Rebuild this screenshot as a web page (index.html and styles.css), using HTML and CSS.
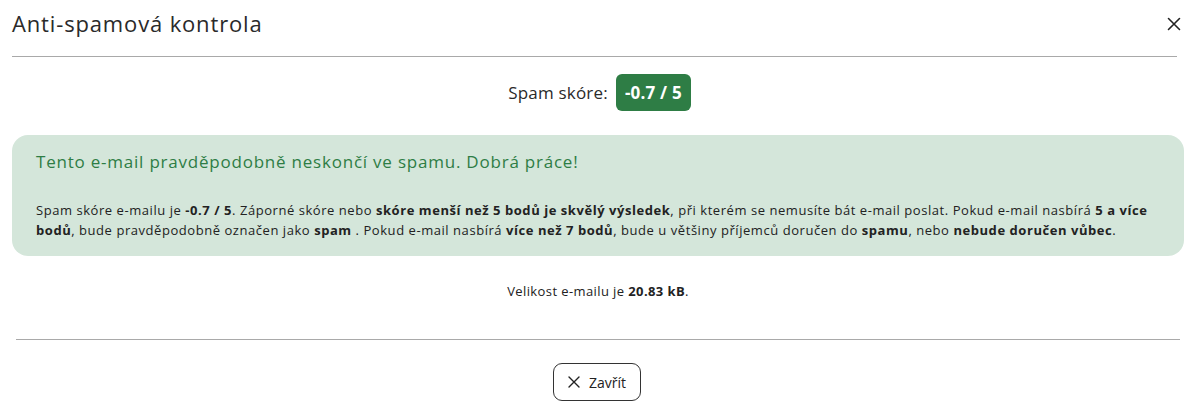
FILE: index.html
```html
<!DOCTYPE html>
<html lang="cs">
<head>
<meta charset="utf-8">
<link rel="stylesheet" href="styles.css">
</head>
<body>
<div class="modal">
  <div class="modal-header">
    <h1 class="title">Anti-spamová kontrola</h1>
    <button class="close" aria-label="Zavřít">
      <svg width="14" height="14" viewBox="0 0 14 14"><path d="M1.5 1.5 L12.5 12.5 M12.5 1.5 L1.5 12.5" stroke="#222" stroke-width="1.6" fill="none" stroke-linecap="round"/></svg>
    </button>
  </div>
  <div class="modal-body">
    <div class="score-row">
      <span class="score-label">Spam skóre:</span>
      <span class="badge">-0.7 / 5</span>
    </div>
    <div class="alert">
      <h2 class="alert-title">Tento e-mail pravděpodobně neskončí ve spamu. Dobrá práce!</h2>
      <p class="alert-text">Spam skóre e-mailu je <b>-0.7 / 5</b>. Záporné skóre nebo <b>skóre menší než 5 bodů je skvělý výsledek</b>, při kterém se nemusíte bát e-mail poslat. Pokud e-mail nasbírá <b>5 a více bodů</b>, bude pravděpodobně označen jako <b>spam</b> . Pokud e-mail nasbírá <b>více než 7 bodů</b>, bude u většiny příjemců doručen do <b>spamu</b>, nebo <b>nebude doručen vůbec</b>.</p>
    </div>
    <p class="size">Velikost e-mailu je <b>20.83 kB</b>.</p>
  </div>
  <div class="modal-footer">
    <button class="btn">
      <svg width="12" height="12" viewBox="0 0 12 12"><path d="M1 1 L11 11 M11 1 L1 11" stroke="#222" stroke-width="1.4" fill="none" stroke-linecap="round"/></svg>
      <span>Zavřít</span>
    </button>
  </div>
</div>
</body>
</html>
```
FILE: styles.css
```css
* { box-sizing: border-box; }
html, body { margin: 0; padding: 0; background: #fff; }
body {
  font-family: "Open Sans", "Noto Sans", sans-serif;
  color: #222;
  width: 1189px;
  height: 410px;
  overflow: hidden;
}
.modal { display: flex; flex-direction: column; }
.modal-header {
  display: flex;
  align-items: center;
  justify-content: space-between;
  margin: 0 12px 0 12px;
  height: 57px;
  border-bottom: 1px solid #a9a9a9;
}
.title {
  margin: 0;
  font-size: 22px;
  font-weight: 400;
  color: #2a2a2a;
  padding-bottom: 10px;
  letter-spacing: 0.85px;
}
.close {
  background: none;
  border: 0;
  padding: 0;
  margin-right: -4px;
  margin-bottom: 8px;
  display: flex;
}
.modal-body { padding: 17px 5px 0 12px; }
.score-row {
  display: flex;
  justify-content: center;
  align-items: center;
  gap: 8px;
  height: 37px;
  padding-left: 3px;
}
.score-label { font-size: 17px; color: #2a2a2a; letter-spacing: 0.2px; }
.badge {
  background: #2e7d45;
  color: #fff;
  font-weight: 700;
  font-size: 17px;
  height: 37px;
  padding: 0 9px;
  border-radius: 6px;
  display: flex;
  align-items: center;
  letter-spacing: 0.2px;
}
.alert {
  margin-top: 24px;
  background: #d4e6da;
  border-radius: 16px;
  padding: 16px 24px 17px 24px;
  height: 121px;
}
.alert-title {
  margin: 0;
  font-size: 17px;
  font-weight: 400;
  color: #2e7d45;
  line-height: 22px;
  letter-spacing: 0.78px;
}
.alert-text {
  margin: 27px 0 0 0;
  font-size: 13px;
  line-height: 20px;
  color: #222;
  letter-spacing: 0.55px;
}
.alert-text b, .size b { font-weight: 700; }
.size {
  margin: 25px 0 0 0;
  text-align: center;
  font-size: 13px;
  line-height: 20px;
  letter-spacing: 0.4px;
}
.modal-footer {
  margin: 38px 9px 0 16px;
  border-top: 1px solid #a9a9a9;
  display: flex;
  justify-content: center;
  padding-top: 23px;
}
.btn {
  display: flex;
  align-items: center;
  gap: 9px;
  height: 38px;
  padding: 0 14px;
  background: #fff;
  border: 1px solid #333;
  border-radius: 9px;
  font-family: inherit;
  font-size: 14px;
  color: #222;
  margin-left: -2px;
}
```
